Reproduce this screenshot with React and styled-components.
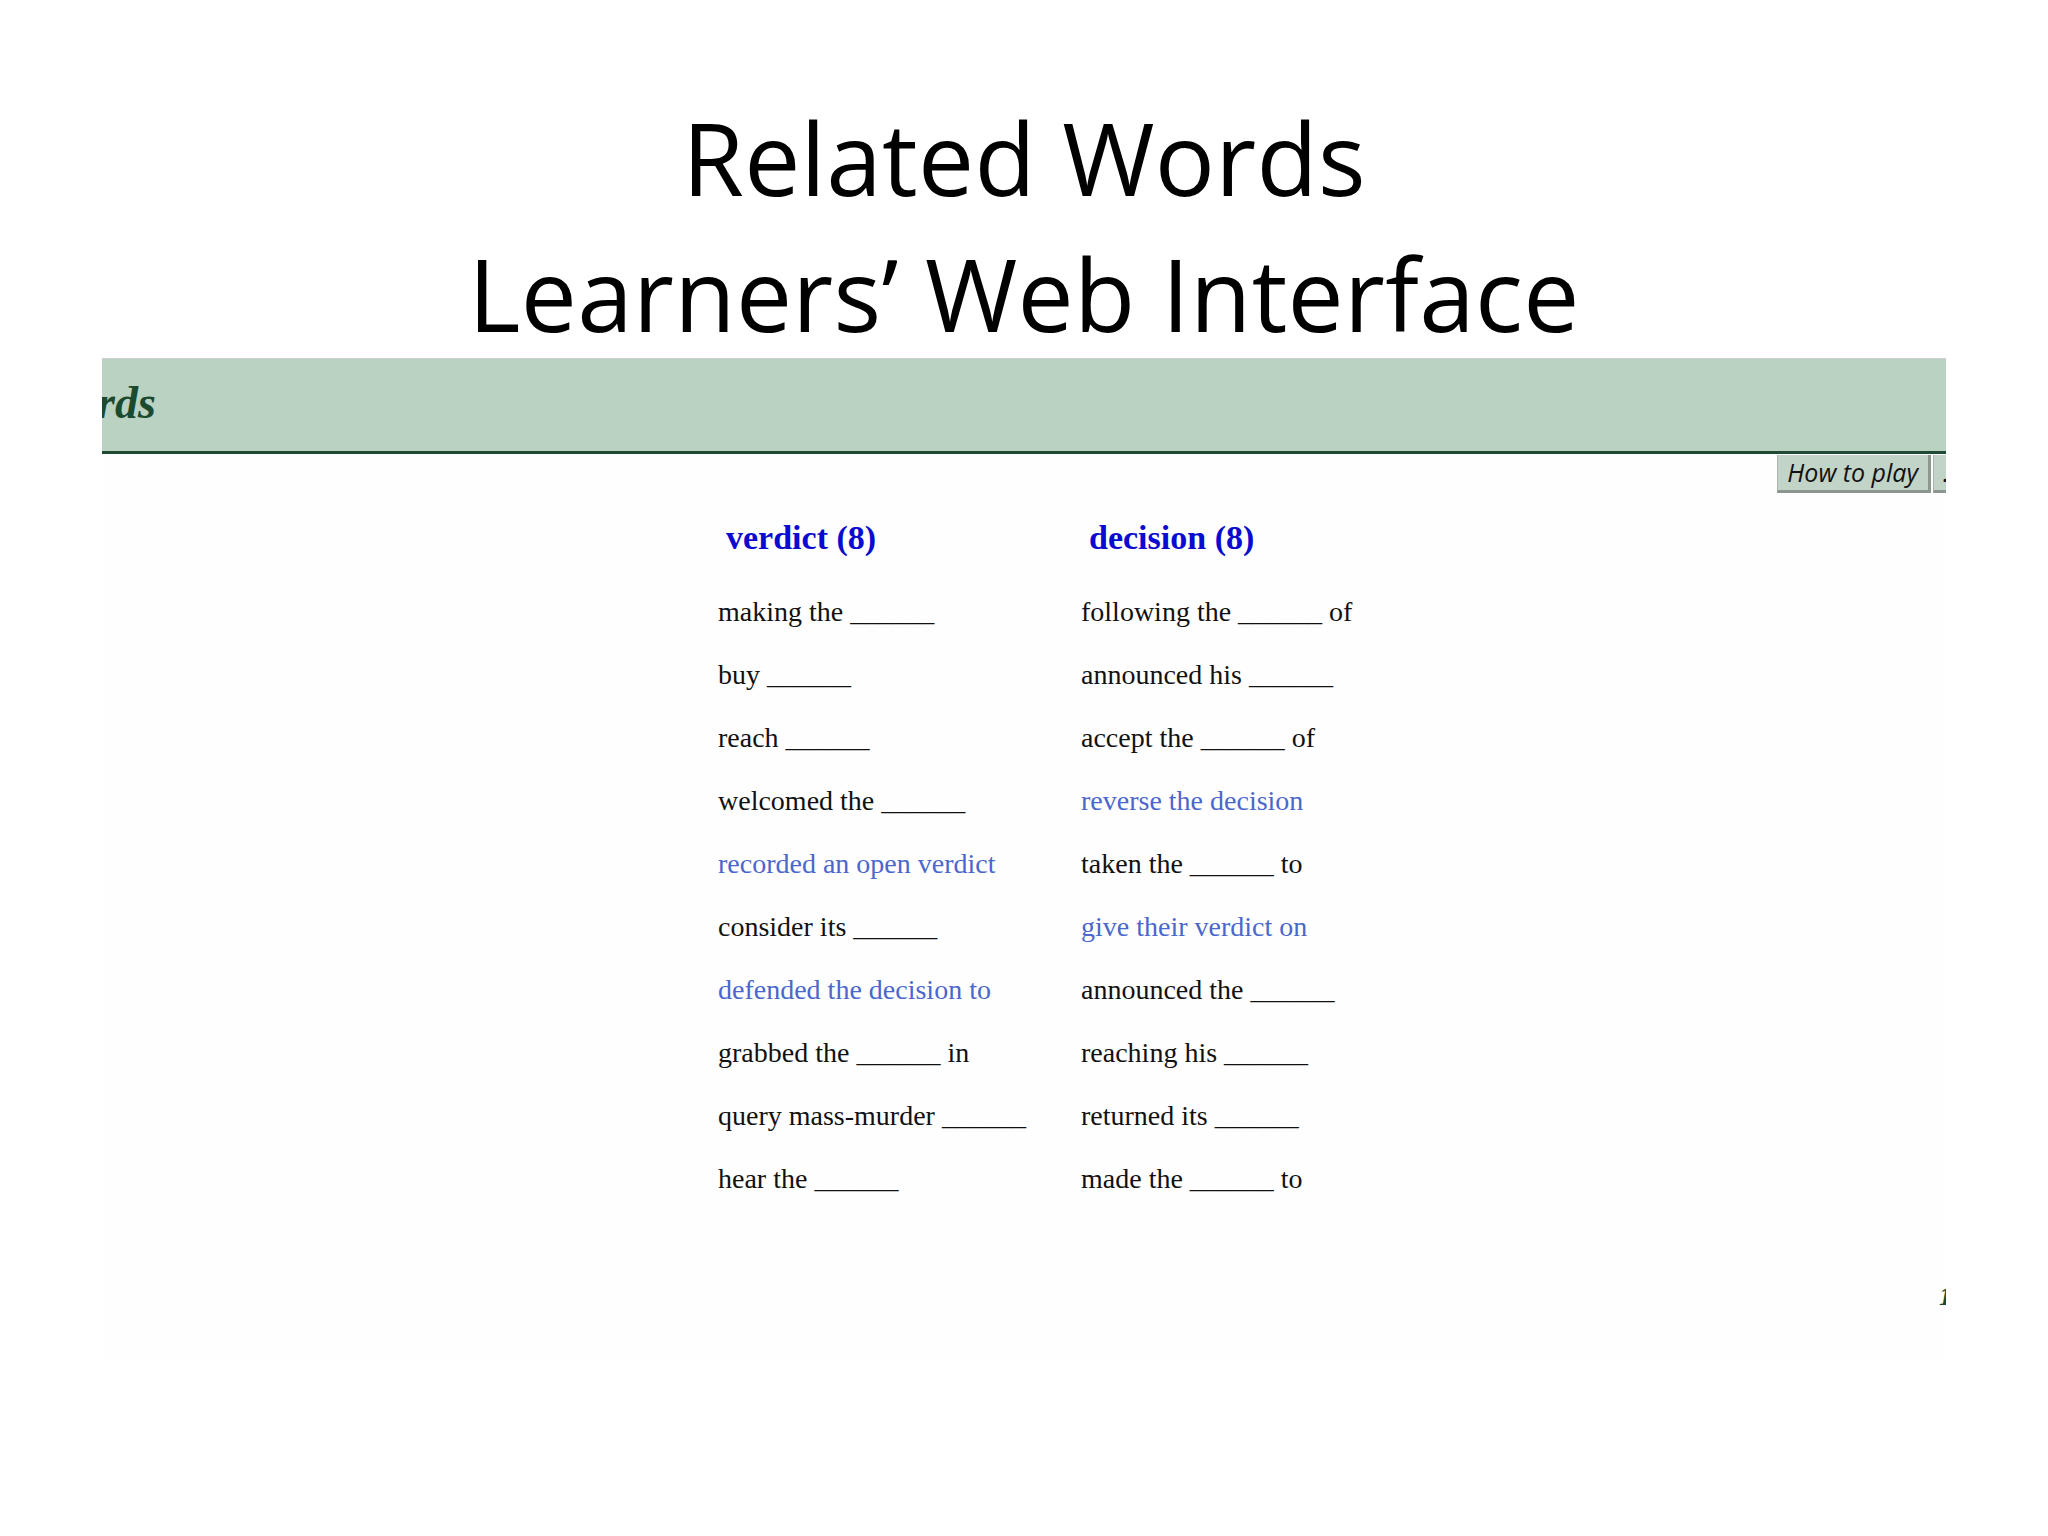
import React from "react";
import styled, { createGlobalStyle } from "styled-components";

const GlobalStyle = createGlobalStyle`
  html, body {
    margin: 0;
    padding: 0;
    background: #ffffff;
  }
`;

const verdictRows = [
  { text: "making the ______" },
  { text: "buy ______" },
  { text: "reach ______" },
  { text: "welcomed the ______" },
  { text: "recorded an open verdict", found: true },
  { text: "consider its ______" },
  { text: "defended the decision to", found: true },
  { text: "grabbed the ______ in" },
  { text: "query mass-murder ______" },
  { text: "hear the ______" },
];

const decisionRows = [
  { text: "following the ______ of" },
  { text: "announced his ______" },
  { text: "accept the ______ of" },
  { text: "reverse the decision", found: true },
  { text: "taken the ______ to" },
  { text: "give their verdict on", found: true },
  { text: "announced the ______" },
  { text: "reaching his ______" },
  { text: "returned its ______" },
  { text: "made the ______ to" },
];

const columns = [
  { word: "verdict", count: 8, rows: verdictRows },
  { word: "decision", count: 8, rows: decisionRows },
];

const App = () => {
  return (
    <Slide>
      <GlobalStyle />
      <Title>
        Related Words
        <br />
        Learners’ Web Interface
      </Title>
      <Browser>
        <Header>
          <SiteName>rds</SiteName>
        </Header>
        <Toolbar>
          <ToolButton>How to play</ToolButton>
          <ToolButton>…</ToolButton>
        </Toolbar>
        <Board>
          {columns.map((col) => (
            <Column key={col.word}>
              <Heading>
                {col.word} ({col.count})
              </Heading>
              {col.rows.map((r, i) => (
                <Clue key={i} $found={r.found}>
                  {r.text}
                </Clue>
              ))}
            </Column>
          ))}
        </Board>
        <Footer>
          <PageNum>1</PageNum>
        </Footer>
      </Browser>
    </Slide>
  );
};

export default App;

// Styling
const Slide = styled.div`
  width: 2048px;
  height: 1536px;
  background: #ffffff;
  overflow: hidden;
`;

const Title = styled.h1`
  margin: 0;
  padding-top: 89px;
  height: 269px;
  font-family: "Open Sans", "Noto Sans", sans-serif;
  font-weight: 400;
  font-size: 100px;
  line-height: 136px;
  text-align: center;
  color: #000;
  letter-spacing: 0.3px;
`;

const Browser = styled.div`
  margin-left: 102px;
  width: 1844px;
  height: 1000px;
  overflow: hidden;
  background: #fefefe;
`;

const Header = styled.div`
  height: 88px;
  padding-bottom: 4px;
  border-top: 1px solid #cccfcd;
  border-bottom: 3px solid #1f4b35;
  background: #b9d2c2;
`;

const SiteName = styled.span`
  display: block;
  margin-left: -5px;
  font-family: "Liberation Serif", "Times New Roman", serif;
  font-weight: 700;
  font-style: italic;
  font-size: 46px;
  line-height: 88px;
  color: #1b4a2e;
`;

const Toolbar = styled.div`
  display: flex;
  justify-content: flex-end;
  gap: 2px;
  margin-top: 1px;
  margin-right: -47px;
`;

const ToolButton = styled.div`
  box-sizing: border-box;
  height: 38px;
  padding: 0 10px 0 9px;
  min-width: 60px;
  background: #c2d3c7;
  border-left: 1px solid #a9b4ab;
  border-right: 3px solid #8d958f;
  border-bottom: 3px solid #8d958f;
  font-family: "Open Sans", "Noto Sans", sans-serif;
  font-style: italic;
  font-size: 25px;
  line-height: 35px;
  color: #111;
  white-space: nowrap;
`;

const Board = styled.div`
  display: grid;
  grid-template-columns: 363px auto;
  margin: 13px 0 0 616px;
`;

const Column = styled.div`
  display: flex;
  flex-direction: column;
`;

const Heading = styled.div`
  margin: 0 0 11px 8px;
  font-family: "Liberation Serif", "Times New Roman", serif;
  font-weight: 700;
  font-size: 34px;
  line-height: 63px;
  color: #0a0ad0;
`;

const Clue = styled.div`
  font-family: "Liberation Serif", "Times New Roman", serif;
  font-size: 28px;
  line-height: 63px;
  white-space: nowrap;
  color: ${(p) => (p.$found ? "#4a67cc" : "#111")};
`;

const Footer = styled.div`
  display: flex;
  justify-content: flex-end;
  margin-top: 74px;
  margin-right: -6px;
`;

const PageNum = styled.span`
  font-family: "Liberation Serif", "Times New Roman", serif;
  font-weight: 700;
  font-style: italic;
  font-size: 26px;
  line-height: 26px;
  color: #1f4a2c;
`;
